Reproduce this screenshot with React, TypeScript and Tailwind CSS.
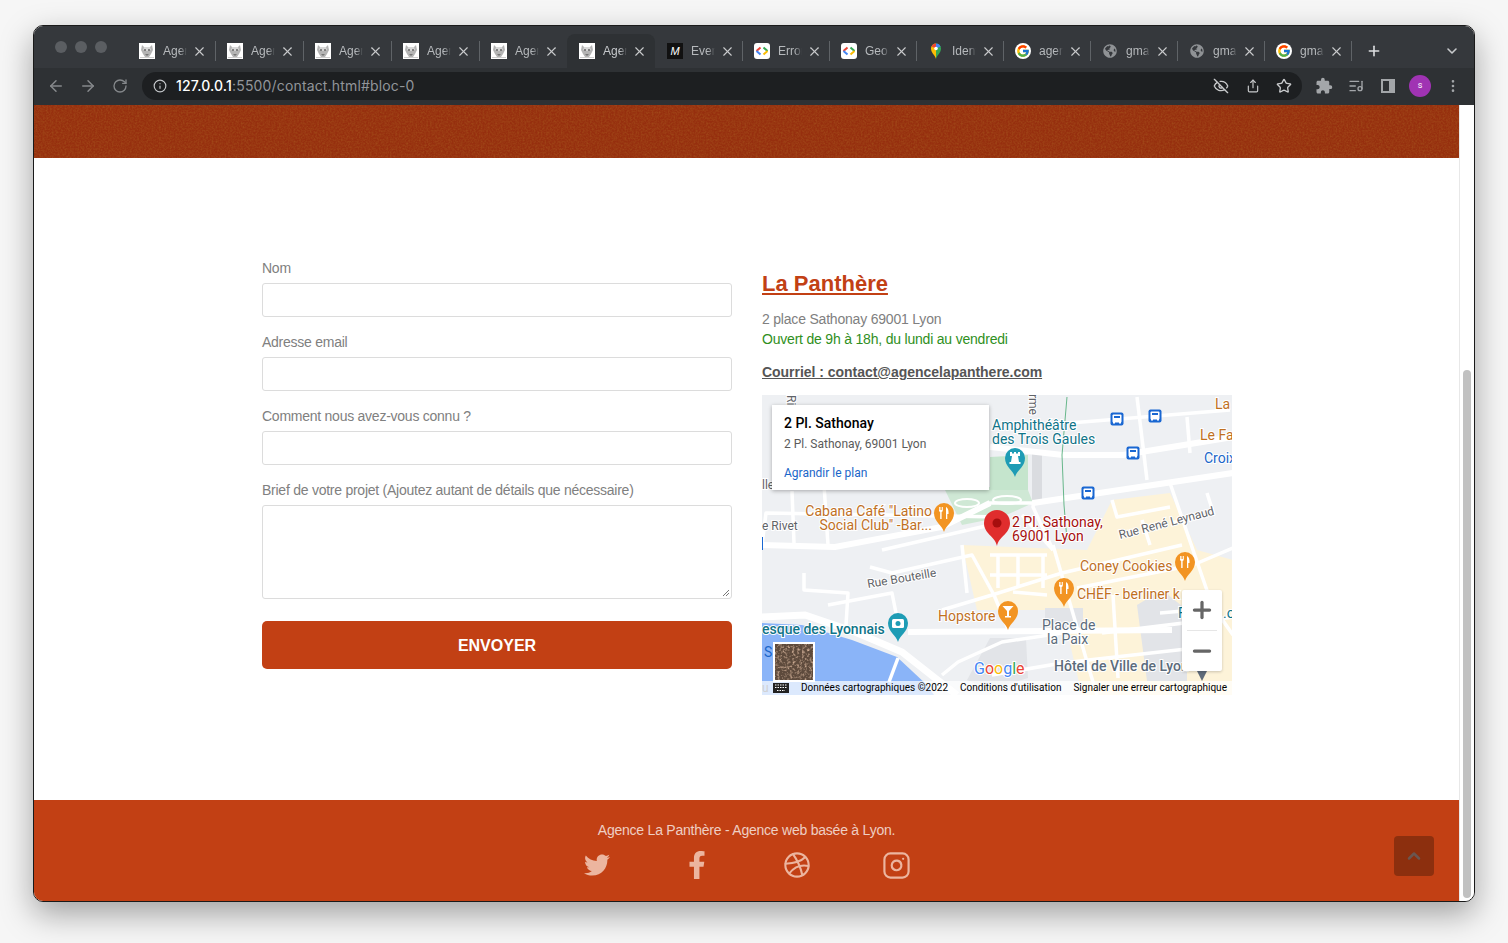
import type { ReactNode } from "react";
import {
  ArrowLeft,
  ArrowRight,
  ChevronDown,
  ChevronUp,
  Dribbble,
  EyeOff,
  Info,
  Instagram,
  ListMusic,
  Minus,
  MoreVertical,
  Plus,
  RotateCw,
  Share,
  Star,
  X,
} from "lucide-react";
import { FaFacebookF, FaGlobeAmericas, FaTwitter } from "react-icons/fa";
import { FcGoogle } from "react-icons/fc";
import { MdExtension } from "react-icons/md";

function PantherIcon() {
  return (
    <svg viewBox="0 0 16 16" className="w-4 h-4 shrink-0 bg-white">
      <path d="M3 2l2 2h6l2-2 1 5-2 4-2 3H6l-2-3-2-4z" fill="#b4b4b4" />
      <path d="M5 4h6l1 3-4 1-4-1z" fill="#d8d8d8" />
      <circle cx="6" cy="7" r="1" fill="#666" />
      <circle cx="10" cy="7" r="1" fill="#666" />
      <path d="M6 11h4l-2 2z" fill="#777" />
      <path d="M1 14h14v1H1z" fill="#ccc" />
    </svg>
  );
}

function MediumIcon() {
  return (
    <span className="w-4 h-4 shrink-0 bg-[#111] flex items-center justify-center text-white text-[11px] italic font-['Liberation_Sans',sans-serif]">
      M
    </span>
  );
}

function DevIcon() {
  return (
    <svg viewBox="0 0 16 16" className="w-4 h-4 shrink-0 rounded-[3px] bg-white">
      <path d="M6.5 4.5L2.5 8" stroke="#ea4335" strokeWidth="2" fill="none" />
      <path d="M2.5 8l4 3.5" stroke="#4285f4" strokeWidth="2" fill="none" />
      <path d="M9.5 4.5l4 3.5" stroke="#34a853" strokeWidth="2" fill="none" />
      <path d="M13.5 8l-4 3.5" stroke="#fbbc04" strokeWidth="2" fill="none" />
    </svg>
  );
}

function MapsIcon() {
  return (
    <svg viewBox="0 0 16 16" className="w-4 h-4 shrink-0">
      <path d="M8 16C7 12 3 10 3 5.500A5 5 0 0 1 8 .5z" fill="#fbbc04" />
      <path d="M8 16c1-4 5-6 5-10.500A5 5 0 0 0 8 .5z" fill="#34a853" />
      <path d="M3.500 3.500A5 5 0 0 1 8 .5v5z" fill="#ea4335" />
      <path d="M8 .5a5 5 0 0 1 4.500 3L8 5.500z" fill="#4285f4" />
      <circle cx="8" cy="5.500" r="1.800" fill="#fff" />
    </svg>
  );
}

function GoogleIcon() {
  return (
    <span className="w-4 h-4 shrink-0 rounded-full bg-white flex items-center justify-center">
      <FcGoogle className="w-[14px] h-[14px]" />
    </span>
  );
}

function GlobeIcon() {
  return <FaGlobeAmericas className="w-[14px] h-[14px] mx-px shrink-0 text-[#8f9295]" />;
}

const tabs = [
  { icon: <PantherIcon />, label: "Agence", width: "w-[88px]" },
  { icon: <PantherIcon />, label: "Agence", width: "w-[88px]" },
  { icon: <PantherIcon />, label: "Agence", width: "w-[88px]" },
  { icon: <PantherIcon />, label: "Agence", width: "w-[88px]" },
  { icon: <PantherIcon />, label: "Agence", width: "w-[88px]", noSep: true },
  { icon: <PantherIcon />, label: "Agence", width: "w-[88px]", active: true, noSep: true },
  { icon: <MediumIcon />, label: "Event", width: "w-[87px]" },
  { icon: <DevIcon />, label: "Error", width: "w-[87px]" },
  { icon: <DevIcon />, label: "Geo", width: "w-[87px]" },
  { icon: <MapsIcon />, label: "Identi", width: "w-[87px]" },
  { icon: <GoogleIcon />, label: "agenc", width: "w-[87px]" },
  { icon: <GlobeIcon />, label: "gmap", width: "w-[87px]" },
  { icon: <GlobeIcon />, label: "gmap", width: "w-[87px]" },
  { icon: <GoogleIcon />, label: "gmap", width: "w-[87px]" },
];

function TabStrip() {
  return (
    <div className="h-[42px] bg-[#35383c] flex items-end">
      <div className="flex gap-2 pl-[21px] w-[93px] self-start pt-[15px]">
        <span className="w-3 h-3 rounded-full bg-[#5b5e62]" />
        <span className="w-3 h-3 rounded-full bg-[#5b5e62]" />
        <span className="w-3 h-3 rounded-full bg-[#5b5e62]" />
      </div>
      {tabs.map((tab, i) => (
        <div
          key={i}
          className={`${tab.width} h-[34px] shrink-0 flex items-center pl-3 rounded-t-lg ${tab.active ? "bg-[#2e3134]" : ""}`}
        >
          {tab.icon}
          <span
            className={`ml-2 w-[24px] overflow-hidden whitespace-nowrap text-[12px] [mask-image:linear-gradient(to_right,black_70%,transparent)] ${tab.active ? "text-[#c4c7ca]" : "text-[#b6b9bc]"}`}
          >
            {tab.label}
          </span>
          <X className="w-[15px] h-[15px] ml-[5px] shrink-0 text-[#c8cacc]" strokeWidth={1.8} />
          <span className="ml-auto" />
          {!tab.noSep && <span className="w-px h-[20px] -mr-px bg-[#5f6367]" />}
        </div>
      ))}
      <div className="h-[34px] flex items-center">
        <Plus className="w-4 h-4 ml-[15px] text-[#dcdee0]" strokeWidth={2.4} />
        <ChevronDown className="w-4 h-4 ml-[62px] text-[#c8cacc]" strokeWidth={2.4} />
      </div>
    </div>
  );
}

function Toolbar() {
  return (
    <div className="h-[37px] bg-[#2e3134] flex items-start pt-1">
      <div className="flex items-center h-[28px] text-[#85888b]">
        <ArrowLeft className="w-[18px] h-[18px] ml-[13px]" />
        <ArrowRight className="w-[18px] h-[18px] ml-[14px]" />
        <RotateCw className="w-4 h-4 ml-[15px]" />
      </div>
      <div className="ml-[14px] w-[1160px] h-[28px] rounded-full bg-[#1d1f21] flex items-center font-['Inter',sans-serif]">
        <Info className="w-[14px] h-[14px] ml-[11px] text-[#c4c7ca]" />
        <span className="ml-[9px] mb-[2px] text-[14px] tracking-[0.16px] text-white font-medium">127.0.0.1</span>
        <span className="mb-[2px] text-[14px] tracking-[0.16px] text-[#92959a]">:5500/contact.html#bloc-0</span>
        <EyeOff className="w-4 h-4 ml-auto mr-px text-[#c8cacc]" />
        <Share className="w-[14px] h-[14px] ml-[16px] text-[#c8cacc]" />
        <Star className="w-4 h-4 ml-[16px] mr-[10px] text-[#c8cacc]" />
      </div>
      <div className="flex items-center h-[28px] text-[#a3a6a9]">
        <MdExtension className="w-[18px] h-[18px] ml-[13px]" />
        <ListMusic className="w-4 h-4 ml-[15px]" />
        <span className="ml-[17px] w-[14px] h-[14px] border-2 border-[#a3a6a9] border-r-[6px]" />
        <span className="ml-[14px] w-[22px] h-[22px] rounded-full bg-[#a033b3] text-white text-[9px] flex items-center justify-center font-['Roboto',sans-serif]">
          s
        </span>
        <MoreVertical className="w-4 h-4 ml-[14px]" />
      </div>
    </div>
  );
}

function Noise({ id, freq, tint }: { id: string; freq: string; tint: string }) {
  return (
    <svg className="absolute inset-0 w-full h-full" preserveAspectRatio="none">
      <filter id={id}>
        <feTurbulence type="fractalNoise" baseFrequency={freq} numOctaves={3} seed={4} />
        <feColorMatrix type="matrix" values={tint} />
      </filter>
      <rect width="100%" height="100%" filter={`url(#${id})`} />
    </svg>
  );
}

function Field({ label, tall }: { label: string; tall?: boolean }) {
  return (
    <div className="mb-[15px]">
      <div className="h-5 mb-[5px] text-[14px] leading-5 tracking-[-0.25px] text-[#808080]">{label}</div>
      <div className={`${tall ? "h-[94px]" : "h-[34px]"} relative rounded-[3px] border border-[#dcdcdc] bg-white`}>
        {tall && (
          <svg viewBox="0 0 8 8" className="absolute right-px bottom-px w-2 h-2">
            <path d="M1 7L7 1M4 7l3-3" stroke="#555" strokeWidth="0.8" />
          </svg>
        )}
      </div>
    </div>
  );
}

function MapPin({ x, y, color, children }: { x: number; y: number; color: string; children: ReactNode }) {
  return (
    <g transform={`translate(${x} ${y})`}>
      <path d="M0 19C-2 12-10 9-10 0A10 10 0 1 1 10 0C10 9 2 12 0 19Z" fill={color} />
      {children}
    </g>
  );
}

function Cutlery() {
  return (
    <g>
      <path d="M-5 -6V-2.500A1.500 1.500 0 0 0 -3.800 -1V6H-2.400V-1A1.500 1.500 0 0 0 -1.200 -2.500V-6H-2V-3H-2.700V-6H-3.500V-3H-4.200V-6Z" fill="#fff" />
      <path d="M2 6V-6C4 -5 4.800 -2.500 4.500 1H3.300V6Z" fill="#fff" />
    </g>
  );
}

function BusStop({ x, y }: { x: number; y: number }) {
  return (
    <g transform={`translate(${x} ${y})`}>
      <rect x="-6.500" y="-6.500" width="13" height="13" rx="2" fill="#1967d2" />
      <rect x="-4.500" y="-4.500" width="9" height="8" rx="1" fill="#fff" />
      <rect x="-3" y="-3" width="6" height="2" fill="#1967d2" />
      <rect x="-4" y="3" width="2" height="1.500" fill="#fff" />
      <rect x="2" y="3" width="2" height="1.500" fill="#fff" />
    </g>
  );
}

const roads = [
  "M0 150L73 152L180 132L228 108",
  "M308 28L468 15",
  "M375 2L385 85",
  "M425 22L428 58",
  "M408 88L431 155L450 210L471 240",
  "M291 155L271 112L272 105",
  "M136 263L127 287",
  "M180 280L196 267L240 247L300 238",
  "M180 132L228 108L271 108",
  "M0 150L4 118L240 122",
  "M30 96L32 148",
  "M62 90L66 150",
  "M42 178L42 195L86 198L84 230",
  "M108 172L130 178L210 160L232 200L246 234",
  "M180 215L230 200L300 178L420 150",
  "M291 150L328 277L335 300",
  "M315 193L431 170L471 153",
  "M351 200L356 283",
  "M251 197L285 200",
  "M398 218L421 216",
  "M236 160L236 193",
  "M256 160L256 193",
  "M281 160L281 193",
  "M228 160L285 160",
  "M228 180L285 180",
  "M260 120L291 155",
  "M120 155L228 130",
  "M66 210L130 198L134 218",
  "M200 150L205 198",
  "M230 280L300 268L460 250",
  "M340 238L471 222",
  "M350 105L355 122L408 112",
  "M380 125L388 150",
  "M410 128L440 120",
  "M445 98L452 120",
];

function MapView() {
  const halo = { stroke: "#fff", strokeWidth: 2, paintOrder: "stroke" } as const;

  return (
    <div className="relative mt-[13px] w-[470px] h-[300px] overflow-hidden bg-[#eef0f3]">
      <svg viewBox="0 0 470 300" className="absolute inset-0 w-full h-full font-['Roboto',sans-serif]">
        {/* yellow blocks and water */}
        <path d="M350 105L408 98L435 155L471 165V300H320L300 215H215L200 150L325 155Z" fill="#fdf3d9" />
        <path d="M375 210L400 195L425 215V286H385Z" fill="#e2e4e8" />
        <path d="M283 213L321 213L321 237L283 237Z" fill="#e2e4e8" />
        <path d="M228 243L264 243L266 283L228 295L205 285Z" fill="#e2e4e8" />
        <path d="M0 228L40 230L90 245L135 262L165 290L172 300H0Z" fill="#8ab4f8" />
        <path d="M183 95L228 92L266 95L271 108L240 122L200 130Z" fill="#cfe8d5" />
        <path d="M228 62L266 60L266 95L228 95Z" fill="#c5e5cd" />
        <path d="M270 55L280 55L280 108L270 108Z" fill="#dadce0" />
        {roads.map((d) => (
          <path key={d} d={d} fill="none" stroke="#fff" strokeWidth="3.500" strokeLinejoin="round" />
        ))}
        <ellipse cx="205" cy="108" rx="12" ry="4" fill="none" stroke="#fff" strokeWidth="2" />
        <ellipse cx="245" cy="105" rx="14" ry="4" fill="none" stroke="#fff" strokeWidth="2" />
        <path d="M0 222L43 220L93 237L140 257L173 283L195 300" fill="none" stroke="#fff" strokeWidth="7" />
        <path d="M0 150L73 152L180 132L228 108" fill="none" stroke="#fff" strokeWidth="6" />
        <path d="M228 52L301 60L361 60L471 42" fill="none" stroke="#fff" strokeWidth="6" />
        <path d="M271 108L471 78" fill="none" stroke="#fff" strokeWidth="6" />
        <path d="M146 237L410 235" fill="none" stroke="#fff" strokeWidth="6" />
        <path d="M305 2L300 60L302 110L305 145" fill="none" stroke="#67b78a" strokeWidth="1" />
        <path d="M0 142V155" stroke="#1967d2" strokeWidth="2" />
        {/* labels */}
        <text x="0" y="297" fontSize="12" fill="#5f6368">u</text>
        <g fontSize="14" fill="#0f7488" {...halo}>
          <text x="230" y="35">Amphithéâtre</text>
          <text x="230" y="49">des Trois Gaules</text>
          <text x="0" y="239" fontWeight="500">esque des Lyonnais</text>
          <text x="416" y="223">F</text>
          <text x="461" y="223">.o</text>
        </g>
        <g fontSize="14" fill="#c0701f" {...halo}>
          <text x="170" y="121" textAnchor="end">Cabana Café "Latino</text>
          <text x="170" y="135" textAnchor="end">Social Club" -Bar...</text>
          <text x="318" y="176">Coney Cookies</text>
          <text x="315" y="204">CHËF - berliner k</text>
          <text x="176" y="226">Hopstore</text>
          <text x="453" y="14">La</text>
          <text x="438" y="45">Le Fa</text>
        </g>
        <text x="442" y="68" fontSize="14" fill="#1a66c9" {...halo}>Croix</text>
        <text x="2" y="262" fontSize="14" fill="#1a66c9">S</text>
        <g fontSize="14" fill="#a50e0e" {...halo}>
          <text x="250" y="132">2 Pl. Sathonay,</text>
          <text x="250" y="146">69001 Lyon</text>
        </g>
        <g fontSize="12" fill="#5f6368" {...halo}>
          <text transform="translate(358 144) rotate(-14.500)">Rue René Leynaud</text>
          <text transform="translate(106 193) rotate(-9.500)">Rue Bouteille</text>
          <text x="0" y="135">e Rivet</text>
          <text x="0" y="94">lle</text>
          <text transform="translate(25 0) rotate(90)">Ri</text>
          <text transform="translate(267 -1) rotate(90)">rme</text>
        </g>
        <g fontSize="14" fill="#5b6b7b" {...halo}>
          <text x="280" y="235">Place de</text>
          <text x="285" y="249">la Paix</text>
          <text x="292" y="276" fontWeight="500">Hôtel de Ville de Lyon</text>
        </g>
        <text x="212" y="279" fontSize="16" {...halo}>
          <tspan fill="#4285f4">G</tspan>
          <tspan fill="#ea4335">o</tspan>
          <tspan fill="#fbbc04">o</tspan>
          <tspan fill="#4285f4">g</tspan>
          <tspan fill="#34a853">l</tspan>
          <tspan fill="#ea4335">e</tspan>
        </text>
        {/* pins */}
        <MapPin x={182} y={118} color="#f29423">
          <Cutlery />
        </MapPin>
        <MapPin x={423} y={167} color="#f29423">
          <Cutlery />
        </MapPin>
        <MapPin x={302} y={193} color="#f29423">
          <Cutlery />
        </MapPin>
        <MapPin x={246} y={216} color="#f29423">
          <path d="M-5.500 -5H5.500L1 0V5H3V6.500H-3V5H-1V0Z" fill="#fff" />
        </MapPin>
        <MapPin x={253} y={63} color="#1e9cb5">
          <path d="M-5 -6H-3V-4.500H-1V-6H1V-4.500H3V-6H5V-2H3L4 4H5.500V6H-5.500V4H-4L-3 -2H-5Z" fill="#fff" />
        </MapPin>
        <MapPin x={136} y={228} color="#1e9cb5">
          <rect x="-6" y="-4" width="12" height="9" rx="1.500" fill="#fff" />
          <circle r="2.500" cy="0.500" fill="#1e9cb5" />
        </MapPin>
        <BusStop x={355} y={24} />
        <BusStop x={393} y={21} />
        <BusStop x={371} y={58} />
        <BusStop x={326} y={98} />
        <g transform="translate(235 115)">
          <path d="M0 36C-2 26-13 24-13 13A13 13 0 1 1 13 13C13 24 2 26 0 36Z" fill="#e02d2d" />
          <circle cy="13" r="4.500" fill="#a50e0e" />
        </g>
        <path d="M435 276H445L440 286Z" fill="#5f6b7a" />
      </svg>

      {/* info window */}
      <div className="absolute left-[10px] top-[10px] w-[217px] h-[85px] bg-white shadow-[0_1px_4px_rgba(0,0,0,0.3)] pl-3 pt-[9px] font-['Roboto',sans-serif]">
        <div className="text-[14px] leading-[18px] font-medium text-black">2 Pl. Sathonay</div>
        <div className="mt-[4px] text-[12px] leading-[16px] text-[#5b5b5b]">2 Pl. Sathonay, 69001 Lyon</div>
        <div className="mt-[13px] text-[12px] leading-[16px] text-[#1a66c9]">Agrandir le plan</div>
      </div>

      {/* zoom control */}
      <div className="absolute left-[420px] top-[195px] w-[40px] h-[81px] bg-white rounded-[2px] shadow-[0_1px_3px_rgba(0,0,0,0.2)] flex flex-col items-center">
        <div className="h-[40px] flex items-center justify-center">
          <Plus className="w-[26px] h-[26px] text-[#666]" strokeWidth={3} />
        </div>
        <div className="w-[30px] h-px bg-[#e6e6e6]" />
        <div className="h-[40px] flex items-center justify-center">
          <Minus className="w-[26px] h-[26px] text-[#666]" strokeWidth={3} />
        </div>
      </div>

      {/* satellite thumbnail */}
      <div className="absolute left-[11px] top-[247px] w-[42px] h-[40px] border-2 border-white bg-[#5d4a3c] overflow-hidden">
        <Noise id="sat" freq="0.4" tint="0 0 0 0 0.62  0 0 0 0 0.42  0 0 0 0 0.3  0 0 0 2.6 -1.2" />
      </div>

      {/* attribution */}
      <div className="absolute left-0 right-0 bottom-0 h-[14px] pb-px bg-white/70 flex items-center text-[10px] leading-[13px] text-black whitespace-nowrap font-['Roboto',sans-serif]">
        <svg viewBox="0 0 16 10" className="ml-[11px] w-4 h-[10px]">
          <path d="M0 0H16V10H0Z" fill="#222" />
          <path d="M2 2H14M2 4.500H14M4 7.500H12" stroke="#fff" strokeWidth="1" strokeDasharray="1.500 1" />
        </svg>
        <span className="ml-3">Données cartographiques ©2022</span>
        <span className="ml-3">Conditions d'utilisation</span>
        <span className="ml-3">Signaler une erreur cartographique</span>
      </div>
    </div>
  );
}

function Footer() {
  return (
    <footer className="relative h-[101px] bg-[#c24014] pt-[20px] flex flex-col items-center">
      <p className="text-[14px] leading-5 tracking-[-0.23px] text-white/75">Agence La Panthère - Agence web basée à Lyon.</p>
      <div className="mt-[10px] flex text-[#ecb59f]">
        <a className="w-[100px] h-[30px] flex items-center justify-center"><FaTwitter className="w-[26px] h-[26px]" /></a>
        <a className="w-[100px] h-[30px] flex items-center justify-center"><FaFacebookF className="w-[26px] h-[28px]" /></a>
        <a className="w-[100px] h-[30px] flex items-center justify-center"><Dribbble className="w-[28px] h-[28px]" strokeWidth={1.8} /></a>
        <a className="w-[100px] h-[30px] flex items-center justify-center"><Instagram className="w-[29px] h-[29px]" strokeWidth={1.8} /></a>
      </div>
      <button className="absolute right-[25px] top-[36px] w-10 h-10 rounded-[4px] bg-[#8c2f0e] flex items-center justify-center">
        <ChevronUp className="w-5 h-5 text-[#6a5650]" strokeWidth={3} />
      </button>
    </footer>
  );
}

export default function App() {
  return (
    <div className="w-[1508px] h-[943px] overflow-hidden bg-[#f6f6f6] pt-[25px] pl-[33px] font-['Liberation_Sans',sans-serif]">
      <div className="w-[1442px] h-[877px] rounded-[10px] overflow-hidden border border-[#1a1a1a] bg-white shadow-[0_12px_32px_rgba(0,0,0,0.35)] flex flex-col">
        <TabStrip />
        <Toolbar />
        <div className="flex flex-1 min-h-0">
          <div className="w-[1425px] flex flex-col">
            {/* textured band */}
            <div className="relative h-[53px] bg-[#962f0e] overflow-hidden">
              <Noise id="band" freq="0.55" tint="0 0 0 0 0.36  0 0 0 0 0.07  0 0 0 0 0.01  0 0 0 1.5 -0.5" />
            </div>

            <main className="h-[642px] bg-white pt-[100px] pl-[228px] flex">
              <div className="w-[470px]">
                <Field label="Nom" />
                <Field label="Adresse email" />
                <Field label="Comment nous avez-vous connu ?" />
                <Field label="Brief de votre projet (Ajoutez autant de détails que nécessaire)" tall />
                <button className="mt-[7px] w-full h-12 pt-px rounded-[5px] bg-[#c24014] text-white text-[16px] font-bold">
                  ENVOYER
                </button>
              </div>

              <div className="ml-[30px] w-[470px]">
                <h1 className="mt-[10px] text-[22px] leading-8 font-bold text-[#c24014] underline">La Panthère</h1>
                <p className="mt-[9px] text-[14px] leading-5 tracking-[-0.2px] text-[#808080]">2 place Sathonay 69001 Lyon</p>
                <p className="text-[14px] leading-5 tracking-[-0.2px] text-[#2f8f22]">Ouvert de 9h à 18h, du lundi au vendredi</p>
                <p className="mt-[13px] text-[14px] leading-5 tracking-[-0.03px] font-bold text-[#555] underline">
                  Courriel : contact@agencelapanthere.com
                </p>
                <MapView />
              </div>
            </main>

            <Footer />
          </div>

          {/* scrollbar */}
          <div className="w-[15px] bg-white border-l border-[#e8e8e8] pl-[3px] pt-[265px]">
            <div className="w-2 h-[528px] rounded-full bg-[#c1c1c1]" />
          </div>
        </div>
      </div>
    </div>
  );
}
